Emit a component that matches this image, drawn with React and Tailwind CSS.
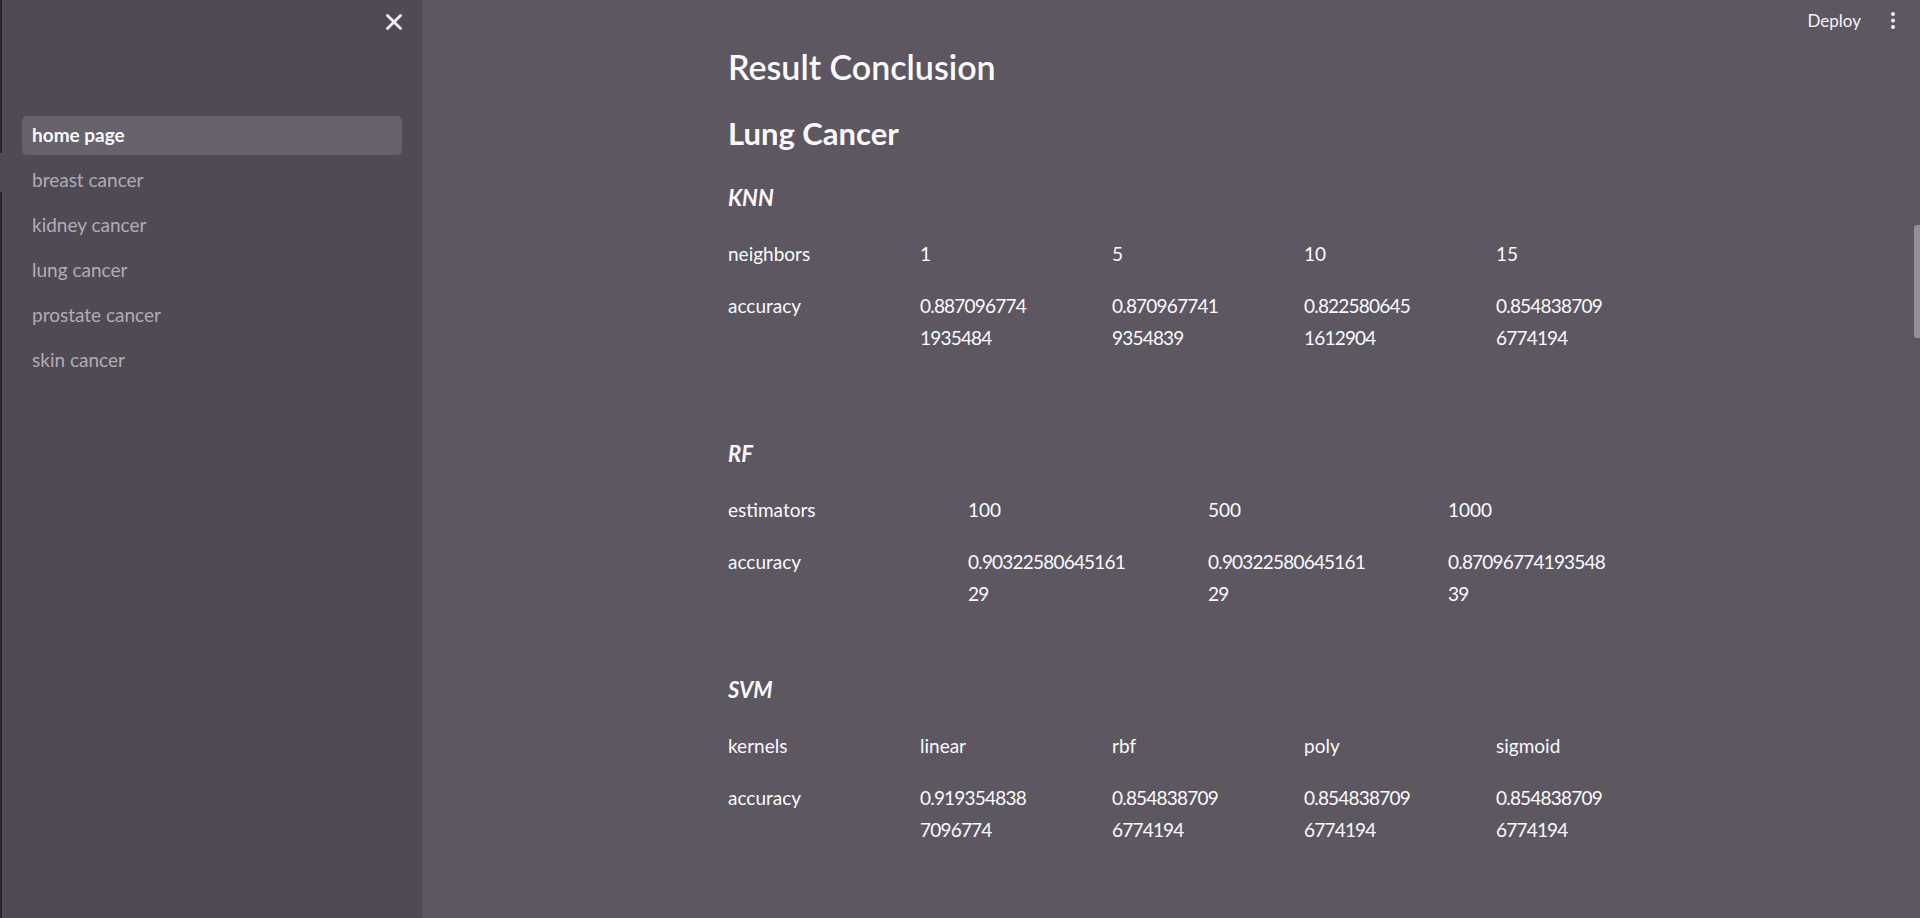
import { IoClose } from "react-icons/io5";

const pages = ["home page", "breast cancer", "kidney cancer", "lung cancer", "prostate cancer", "skin cancer"];

const models = [
  {
    name: "KNN",
    cols: "grid-cols-5",
    after: "mb-[84px]",
    label: "neighbors",
    params: ["1", "5", "10", "15"],
    scores: [
      ["0.887096774", "1935484"],
      ["0.870967741", "9354839"],
      ["0.822580645", "1612904"],
      ["0.854838709", "6774194"],
    ],
  },
  {
    name: "RF",
    cols: "grid-cols-4",
    after: "mb-[64px]",
    label: "estimators",
    params: ["100", "500", "1000"],
    scores: [
      ["0.90322580645161", "29"],
      ["0.90322580645161", "29"],
      ["0.87096774193548", "39"],
    ],
  },
  {
    name: "SVM",
    cols: "grid-cols-5",
    after: "mb-[64px]",
    label: "kernels",
    params: ["linear", "rbf", "poly", "sigmoid"],
    scores: [
      ["0.919354838", "7096774"],
      ["0.854838709", "6774194"],
      ["0.854838709", "6774194"],
      ["0.854838709", "6774194"],
    ],
  },
];

const Sidebar = () => {
  return (
    <aside className="flex h-full w-[422px] shrink-0 bg-[#504a55]">
      <div className="flex w-[2px] flex-col">
        <div className="h-[153px] bg-[#2b2730]" />
        <div className="h-[39px]" />
        <div className="flex-1 bg-[#2b2730]" />
      </div>
      <div className="flex flex-1 flex-col">
        <div className="flex h-[44px] items-center justify-end pr-[13px]">
          <IoClose size={30} className="text-[#f0eef2]" />
        </div>
        <nav className="mt-[72px] flex flex-col gap-[6px] pl-[20px] pr-[20px]">
          {pages.map((page, i) => (
            <div
              key={page}
              className={`flex h-[39px] items-center rounded-[5px] pl-[10px] text-[19px] ${
                i === 0 ? "bg-[#68626d] font-bold text-[#fafafa]" : "text-[#b1acb6]"
              }`}
            >
              {page}
            </div>
          ))}
        </nav>
      </div>
    </aside>
  );
};

const ModelTable = ({ model }) => {
  return (
    <section className={model.after}>
      <h4 className="mb-[24px] text-[22px] leading-[32px] font-bold italic">{model.name}</h4>
      <div className={`grid ${model.cols} gap-x-[80px] text-[19px] leading-[32px]`}>
        <div>{model.label}</div>
        {model.params.map((p, i) => (
          <div key={i}>{p}</div>
        ))}
      </div>
      <div className={`mt-[20px] grid ${model.cols} gap-x-[80px] text-[19px] leading-[32px]`}>
        <div>accuracy</div>
        {model.scores.map((s, i) => (
          <div key={i} className="whitespace-nowrap tracking-[-0.8px]">
            <div>{s[0]}</div>
            <div>{s[1]}</div>
          </div>
        ))}
      </div>
    </section>
  );
};

export default function App() {
  return (
    <div className="flex h-[918px] w-full overflow-hidden bg-[#5d5762] font-['Lato',sans-serif] text-[#fafafa]">
      <Sidebar />
      <main className="relative flex flex-1 flex-col pr-[6px]">
        <header className="flex h-[42px] items-center justify-end gap-[30px] pr-[19px]">
          <button className="text-[17px] text-[#f4f2f6]">Deploy</button>
          <svg width="4" height="17" viewBox="0 0 4 17" className="mt-[-1px]">
            <circle cx="2" cy="2" r="2" fill="#f4f2f6" />
            <circle cx="2" cy="8.5" r="2" fill="#f4f2f6" />
            <circle cx="2" cy="15" r="2" fill="#f4f2f6" />
          </svg>
        </header>
        <div className="mx-auto w-[880px]">
          <h2 className="mt-[4px] text-[34px] leading-[42px] font-semibold">Result Conclusion</h2>
          <h3 className="mt-[25px] text-[31px] leading-[40px] font-bold">Lung Cancer</h3>
          <div className="mt-[29px]">
            {models.map((m) => (
              <ModelTable key={m.name} model={m} />
            ))}
          </div>
        </div>
        <div className="absolute right-0 top-[225px] h-[113px] w-[6px] rounded-l-[3px] bg-[#938e98]" />
      </main>
    </div>
  );
}
